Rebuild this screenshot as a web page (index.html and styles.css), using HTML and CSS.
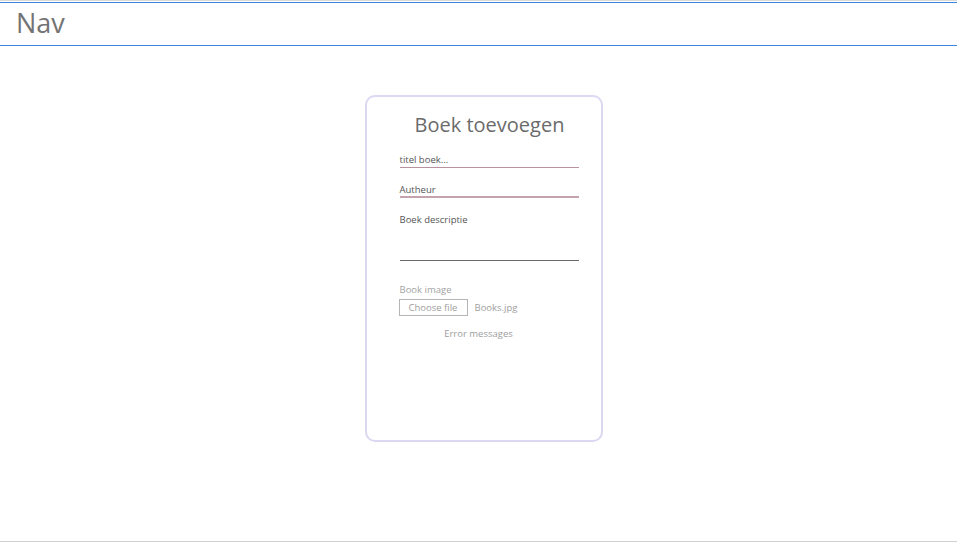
FILE: index.html
```html
<!DOCTYPE html>
<html lang="nl">
<head>
<meta charset="utf-8">
<title>Boek toevoegen</title>
<link rel="stylesheet" href="styles.css">
</head>
<body>
<div class="page">
  <header class="nav">
    <span class="nav-title">Nav</span>
  </header>
  <main class="main">
    <form class="card">
      <h1 class="card-title">Boek toevoegen</h1>
      <div class="field field-titel"><span class="placeholder">titel boek...</span></div>
      <div class="field field-auteur"><span class="placeholder">Autheur</span></div>
      <div class="field field-desc"><span class="placeholder">Boek descriptie</span></div>
      <div class="image-label">Book image</div>
      <div class="file-row">
        <span class="file-btn">Choose file</span>
        <span class="file-name">Books.jpg</span>
      </div>
      <div class="errors">Error messages</div>
    </form>
  </main>
  <footer class="footer"></footer>
</div>
</body>
</html>
```
FILE: styles.css
```css
html, body {
  margin: 0;
  padding: 0;
  background: #fff;
  font-family: "Open Sans", "Noto Sans", sans-serif;
}
.page {
  border-top: 1px solid #d9d9d9;
  padding-top: 1px;
}
.nav {
  border-top: 1px solid #3d83e0;
  border-bottom: 1px solid #3d83e0;
  height: 42px;
  display: flex;
  align-items: center;
  padding-left: 16px;
}
.nav-title {
  font-size: 27px;
  color: #737373;
  font-weight: 400;
  line-height: 1;
  margin-top: -3px;
}
.main {
  height: 495px;
  display: flex;
  justify-content: center;
  align-items: flex-start;
  padding-left: 10px;
  box-sizing: border-box;
  padding-top: 49px;
}
.card {
  width: 238px;
  height: 347px;
  box-sizing: border-box;
  border: 2px solid #dcd8f2;
  border-radius: 10px;
  padding: 14px 21px 0 33px;
  display: flex;
  flex-direction: column;
}
.card-title {
  margin: 0 0 14px 0;
  font-size: 20px;
  font-weight: 400;
  color: #6b6b6b;
  text-align: center;
  line-height: 28px;
}
.field {
  width: 179px;
  font-size: 9.5px;
  color: #555;
  line-height: 12px;
}
.field-titel {
  border-bottom: 1px solid #b9929e;
  height: 13px;
  padding-top: 1px;
}
.field-auteur {
  margin-top: 15px;
  border-bottom: 2px solid #c4a3ad;
  height: 12px;
  padding-top: 1px;
}
.field-desc {
  margin-top: 14px;
  border-bottom: 1px solid #6a6a6a;
  height: 46px;
  padding-top: 2px;
}
.image-label {
  margin-top: 23px;
  font-size: 9.5px;
  color: #a3a3a3;
  line-height: 12px;
}
.file-row {
  margin-top: 3px;
  display: flex;
  align-items: center;
  gap: 7px;
  margin-left: -1px;
}
.file-btn {
  border: 1px solid #b5b5b5;
  color: #9e9e9e;
  font-size: 9.5px;
  line-height: 15px;
  width: 67px;
  text-align: center;
}
.file-name {
  font-size: 9.5px;
  color: #9e9e9e;
}
.errors {
  margin-top: 12px;
  width: 158px;
  text-align: center;
  font-size: 9.5px;
  color: #9e9e9e;
  line-height: 12px;
}
.footer {
  border-top: 1px solid #cfcfcf;
  height: 2px;
}
```
